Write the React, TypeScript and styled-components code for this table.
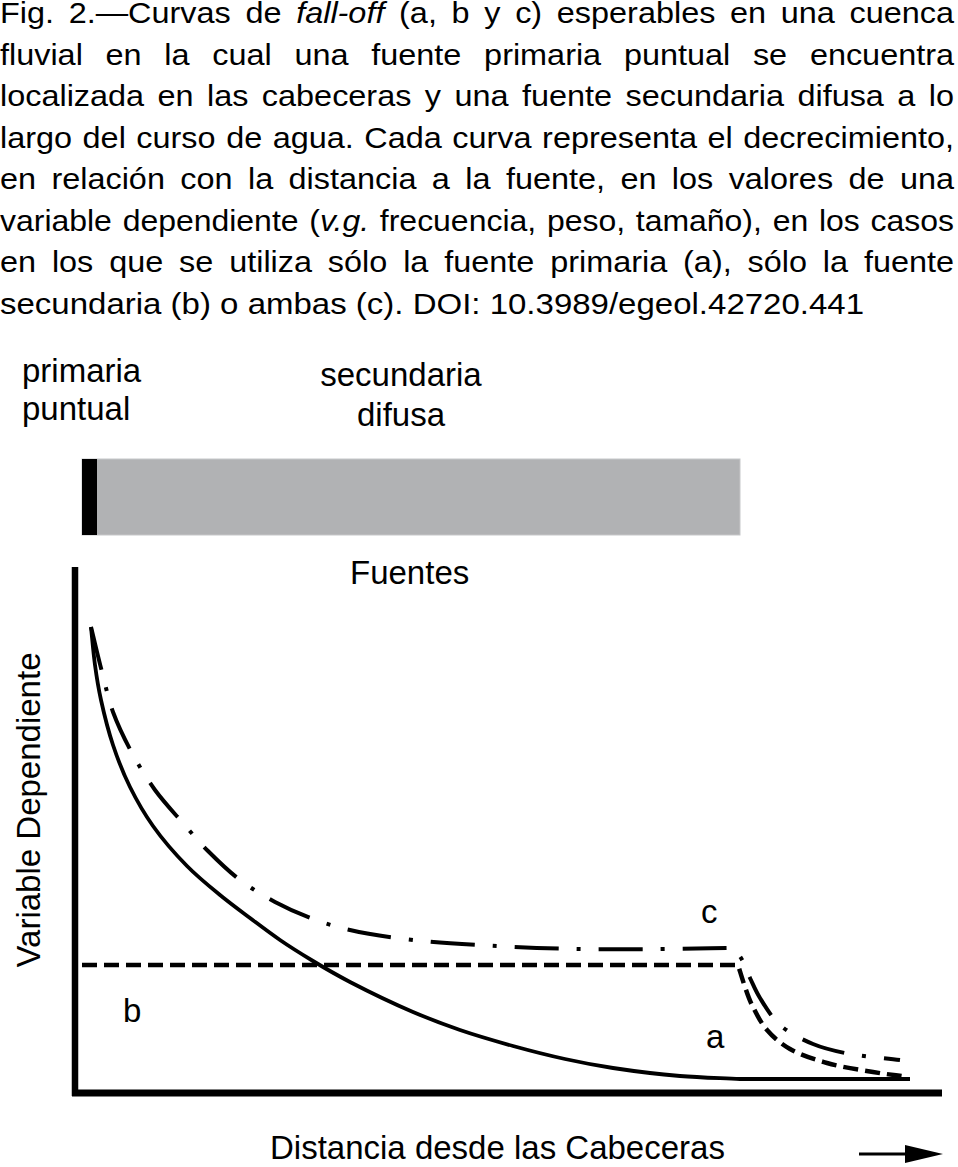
import React from "react"
import styled, { createGlobalStyle } from "styled-components"

const GlobalStyle = createGlobalStyle`
  html, body {
    margin: 0;
    padding: 0;
    background: #ffffff;
    overflow: hidden;
  }
  body {
    width: 958px;
    height: 1167px;
  }
`

const Page = styled.div`
  width: 958px;
  height: 1167px;
  display: flex;
  flex-direction: column;
  color: #000;
  font-family: "Liberation Sans", Arial, sans-serif;
`

const Caption = styled.div`
  margin-top: -8px;
  height: 332px;
  padding: 0 4px 0 0;
  font-size: 30px;
  line-height: 41.5px;
  flex: none;
`

const CaptionLine = styled.div<{ $scale: number; $justify: boolean }>`
  width: ${(p) => 100 / p.$scale}%;
  transform: scaleX(${(p) => p.$scale});
  transform-origin: left center;
  text-align: ${(p) => (p.$justify ? "justify" : "left")};
  text-align-last: ${(p) => (p.$justify ? "justify" : "left")};
`

const Figure = styled.svg`
  display: block;
  flex: none;
  width: 958px;
  height: 843px;
`

const Label = styled.text`
  font-family: "Liberation Sans", Arial, sans-serif;
  font-size: 33px;
  fill: #000;
`

type Pt = [number, number]

// centripetal catmull-rom, returned as bezier "C" commands starting at pts[0]
const curveThrough = (pts: Pt[]) => {
  let d = ""
  for (let i = 0; i < pts.length - 1; i++) {
    const p0 = pts[i - 1] || pts[i]
    const p1 = pts[i]
    const p2 = pts[i + 1]
    const p3 = pts[i + 2] || p2
    const d1 = Math.hypot(p1[0] - p0[0], p1[1] - p0[1])
    const d2 = Math.hypot(p2[0] - p1[0], p2[1] - p1[1])
    const d3 = Math.hypot(p3[0] - p2[0], p3[1] - p2[1])
    const r1 = Math.sqrt(d1)
    const r2 = Math.sqrt(d2)
    const r3 = Math.sqrt(d3)
    const b1: Pt =
      d1 > 0
        ? [0, 1].map(
            (k) => (d1 * p2[k] - d2 * p0[k] + (2 * d1 + 3 * r1 * r2 + d2) * p1[k]) / (3 * r1 * (r1 + r2))
          ) as Pt
        : [p1[0] + (p2[0] - p1[0]) / 3, p1[1] + (p2[1] - p1[1]) / 3]
    const b2: Pt =
      d3 > 0
        ? [0, 1].map(
            (k) => (d3 * p1[k] - d2 * p3[k] + (2 * d3 + 3 * r3 * r2 + d2) * p2[k]) / (3 * r3 * (r3 + r2))
          ) as Pt
        : [p2[0] - (p2[0] - p1[0]) / 3, p2[1] - (p2[1] - p1[1]) / 3]
    d += ` C${b1[0].toFixed(1)},${b1[1].toFixed(1)} ${b2[0].toFixed(1)},${b2[1].toFixed(1)} ${p2[0]},${p2[1]}`
  }
  return d
}

// curve a: primary source only
const pathA =
  "M91,627" +
  curveThrough([
    [91, 627], [95, 665], [101, 700], [113, 745], [130, 787], [153, 826],
    [187, 866], [220, 895], [250, 918], [280, 940], [313, 961], [350, 982],
    [413, 1012], [460, 1030], [513, 1046], [565, 1059], [613, 1068],
    [680, 1076], [740, 1079],
  ]) +
  " L910,1079"

// curve b: secondary source only
const pathB =
  "M82,965 L738,965" +
  curveThrough([
    [738, 965], [744, 984], [752, 1005], [767, 1030], [790, 1049],
    [827, 1063], [873, 1072], [908, 1077],
  ])

// curve c: both sources
const pathC =
  "M91,627" +
  curveThrough([
    [91, 627], [102, 672], [113, 712], [132, 753], [155, 790], [182, 822],
    [208, 851], [240, 880], [275, 902], [313, 919], [350, 930], [413, 940],
    [497, 946], [580, 949], [660, 949], [733, 948],
  ]) +
  curveThrough([
    [733, 948], [741, 958], [750, 978], [760, 998], [780, 1025],
    [813, 1044], [845, 1053], [900, 1060],
  ])

const lines: { parts: React.ReactNode; scale: number; justify: boolean }[] = [
  { parts: <>Fig. 2.—Curvas de <i>fall-off</i> (a, b y c) esperables en una cuenca</>, scale: 1.08, justify: true },
  { parts: <>fluvial en la cual una fuente primaria puntual se encuentra</>, scale: 1.08, justify: true },
  { parts: <>localizada en las cabeceras y una fuente secundaria difusa a lo</>, scale: 1.08, justify: true },
  { parts: <>largo del curso de agua. Cada curva representa el decrecimiento,</>, scale: 1.08, justify: true },
  { parts: <>en relación con la distancia a la fuente, en los valores de una</>, scale: 1.08, justify: true },
  { parts: <>variable dependiente (<i>v.g.</i> frecuencia, peso, tamaño), en los casos</>, scale: 1.065, justify: true },
  { parts: <>en los que se utiliza sólo la fuente primaria (a), sólo la fuente</>, scale: 1.08, justify: true },
  { parts: <>secundaria (b) o ambas (c). DOI: 10.3989/egeol.42720.441</>, scale: 1.1, justify: false },
]

export default function App() {
  return (
    <Page>
      <GlobalStyle />
      <Caption>
        {lines.map((l, i) => (
          <CaptionLine key={i} $scale={l.scale} $justify={l.justify}>
            {l.parts}
          </CaptionLine>
        ))}
      </Caption>
      <Figure viewBox="0 324 958 843">
        {/* sources */}
        <Label x={22} y={382}>primaria</Label>
        <Label x={22} y={420}>puntual</Label>
        <Label x={401} y={386} textAnchor="middle">secundaria</Label>
        <Label x={401} y={426} textAnchor="middle">difusa</Label>
        <rect x={82} y={459} width={658} height={76} fill="#b1b2b4" stroke="#c6c7c9" strokeWidth={1} />
        <rect x={82} y={459} width={15} height={76} fill="#000" />
        <Label x={350} y={584}>Fuentes</Label>

        {/* axes */}
        <line x1={75} y1={567} x2={75} y2={1096} stroke="#000" strokeWidth={6.5} />
        <line x1={72} y1={1093} x2={942} y2={1093} stroke="#000" strokeWidth={7} />
        <Label transform="translate(40,810) rotate(-90)" textAnchor="middle">Variable Dependiente</Label>

        {/* curves */}
        <path d={pathA} fill="none" stroke="#000" strokeWidth={3.8} />
        <path d={pathC} fill="none" stroke="#000" strokeWidth={4} strokeDasharray="44 18 4 18" />
        <path d={pathB} fill="none" stroke="#000" strokeWidth={4.5} strokeDasharray="15 7" />

        <Label x={701} y={923}>c</Label>
        <Label x={706} y={1048}>a</Label>
        <Label x={123} y={1022}>b</Label>

        <Label x={270} y={1159}>Distancia desde las Cabeceras</Label>
        <line x1={859} y1={1154} x2={912} y2={1154} stroke="#000" strokeWidth={3} />
        <polygon points="905,1145 943,1154 905,1163" fill="#000" />
      </Figure>
    </Page>
  )
}
